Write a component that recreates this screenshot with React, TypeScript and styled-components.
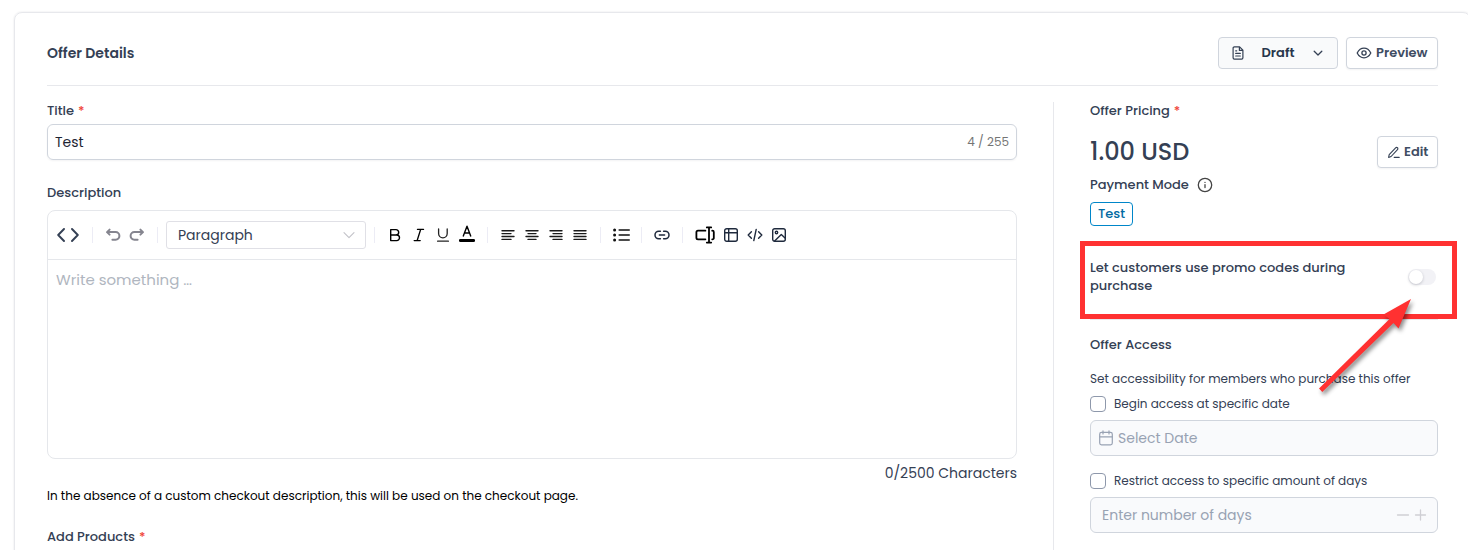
import React from "react";
import styled, { createGlobalStyle, css } from "styled-components";

const GlobalStyle = createGlobalStyle`
  *, *::before, *::after { box-sizing: border-box; }
  body {
    margin: 0;
    background: #fff;
    color: #344054;
    font-family: Poppins, Inter, sans-serif;
    overflow: hidden;
  }
  svg { display: block; flex: none; }
  button { font: inherit; }
`;

const Page = styled.div`
  position: relative;
  height: 550px;
  padding: 12px 0 0 14px;
  overflow: hidden;
`;

const Card = styled.main`
  width: 1457px;
  height: 600px;
  padding: 0 32px;
  border: 1px solid #e7e8ec;
  border-radius: 8px;
  box-shadow: 0 0 2px rgba(16, 24, 40, 0.12);
`;

const Header = styled.header`
  display: flex;
  align-items: center;
  justify-content: space-between;
  height: 73px;
  padding-top: 7px;
  border-bottom: 1px solid #e7e8ec;
`;

const Heading = styled.h1`
  margin: 0;
  font-size: 14px;
  font-weight: 600;
  line-height: 20px;
`;

const Actions = styled.div`
  display: flex;
  gap: 8px;
`;

const Button = styled.button<{ $width: number; $muted?: boolean }>`
  display: flex;
  align-items: center;
  width: ${(p) => p.$width}px;
  height: 32px;
  padding: 0 9px;
  gap: 4px;
  border: 1px solid #d0d5dd;
  border-radius: 4px;
  background: ${(p) => (p.$muted ? "#f9fafb" : "#fff")};
  box-shadow: ${(p) => (p.$muted ? "none" : "0 1px 2px rgba(16, 24, 40, 0.05)")};
  color: ${(p) => (p.$muted ? "#27364b" : "#3f4d63")};
  font-size: 13px;
  font-weight: 600;
  white-space: nowrap;
  ${(p) =>
    p.$muted &&
    css`
      justify-content: space-between;
      padding: 0 13px;
    `}
`;

const Columns = styled.div`
  display: flex;
  padding-top: 16px;
`;

const MainColumn = styled.section`
  width: 970px;
`;

const SideColumn = styled.aside`
  width: 385px;
  height: 490px;
  margin-left: 36px;
  padding-left: 36px;
  border-left: 1px solid #e7e8ec;
`;

const Label = styled.div`
  display: flex;
  align-items: center;
  height: 18px;
  font-size: 13px;
  font-weight: 500;
  line-height: 18px;
  white-space: nowrap;
`;

const Required = styled.span`
  margin-left: 4px;
  color: #f04438;
`;

const TitleField = styled.div`
  display: flex;
  align-items: center;
  justify-content: space-between;
  height: 36px;
  margin: 4px 0 24px;
  padding: 0 7px;
  border: 1px solid #d0d5dd;
  border-radius: 6px;
  box-shadow: 0 1px 2px rgba(16, 24, 40, 0.05);
  color: #1d2433;
  font-size: 14px;
`;

const Counter = styled.span`
  color: #757575;
  font-size: 12px;
`;

const Editor = styled.div`
  height: 249px;
  margin-top: 8px;
  border: 1px solid #e5e7eb;
  border-radius: 8px;
`;

const Toolbar = styled.div`
  display: flex;
  align-items: center;
  height: 49px;
  padding: 0 9px;
  border-bottom: 1px solid #e5e7eb;
`;

const ToolGroup = styled.div`
  display: flex;
  align-items: center;
  gap: 8px;
  margin-left: 12px;
`;

const Separator = styled.span<{ $left?: number }>`
  width: 1px;
  height: 16px;
  margin-left: ${(p) => p.$left ?? 12}px;
  background: #ececf5;
`;

const StyleSelect = styled.div`
  display: flex;
  align-items: center;
  justify-content: space-between;
  width: 200px;
  height: 28px;
  margin-left: 8px;
  padding: 0 10px 0 11px;
  border: 1px solid #e0e0e6;
  border-radius: 3px;
  font-size: 14px;
`;

const Placeholder = styled.div`
  padding: 10px 8px;
  color: #b0b6c0;
  font-size: 15px;
  line-height: 20px;
`;

const CharacterCount = styled.div`
  height: 20px;
  margin-top: 4px;
  font-size: 14px;
  line-height: 20px;
  text-align: right;
`;

const Note = styled.p`
  margin: 4px 0 23px;
  color: #000;
  font-size: 12px;
  line-height: 18px;
`;

const PriceRow = styled.div`
  display: flex;
  align-items: center;
  justify-content: space-between;
  height: 32px;
  margin-top: 16px;
`;

const Price = styled.div`
  font-size: 24px;
  font-weight: 500;
  line-height: 32px;
`;

const ModeRow = styled.div`
  display: flex;
  align-items: center;
  gap: 8px;
  margin-top: 8px;
`;

const Badge = styled.span`
  display: flex;
  align-items: center;
  justify-content: center;
  width: 43px;
  height: 24px;
  margin-top: 8px;
  border: 1px solid #0086c9;
  border-radius: 4px;
  color: #026aa2;
  font-size: 13px;
  font-weight: 500;
`;

const PromoRow = styled.div`
  display: flex;
  align-items: center;
  justify-content: space-between;
  height: 94px;
  padding: 8px 2px 0 0;
  border-bottom: 1px solid #e7e8ec;
`;

const PromoText = styled.div`
  width: 290px;
  font-size: 13px;
  font-weight: 500;
  line-height: 18px;
`;

const Toggle = styled.span`
  display: flex;
  align-items: center;
  width: 28px;
  height: 16px;
  border-radius: 8px;
  background: #f2f2f6;
  &::before {
    content: "";
    width: 14px;
    height: 14px;
    margin-left: 1px;
    border-radius: 50%;
    background: #fff;
    box-shadow: 0 1px 3px rgba(16, 24, 40, 0.22);
  }
`;

const AccessHeading = styled(Label)`
  margin-top: 16px;
`;

const Hint = styled.div`
  height: 18px;
  margin-top: 16px;
  font-size: 12px;
  line-height: 18px;
  white-space: nowrap;
`;

const CheckRow = styled.label<{ $top: number }>`
  display: flex;
  align-items: center;
  gap: 8px;
  height: 16px;
  margin-top: ${(p) => p.$top}px;
  font-size: 12px;
  white-space: nowrap;
`;

const Box = styled.span`
  width: 16px;
  height: 16px;
  border: 1px solid #8e98ab;
  border-radius: 4px;
  background: #fff;
`;

const DisabledField = styled.div<{ $pad: string }>`
  display: flex;
  align-items: center;
  gap: 5px;
  height: 36px;
  margin-top: 8px;
  padding: ${(p) => p.$pad};
  border: 1px solid #d0d5dd;
  border-radius: 6px;
  background: #f9fafc;
  color: #98a2b3;
  font-size: 14px;
`;

const Stepper = styled.span`
  display: flex;
  gap: 4px;
  margin-left: auto;
`;

const Highlight = styled.div`
  position: absolute;
  left: 1080px;
  top: 241px;
  width: 377px;
  height: 78px;
  border: 5px solid #ff3131;
`;

const Arrow = styled.svg`
  position: absolute;
  left: 1300px;
  top: 280px;
  filter: drop-shadow(2px 3px 2px rgba(0, 0, 0, 0.45));
`;

type IconProps = {
  w?: number;
  h?: number;
  color?: string;
  sw?: number;
  children: React.ReactNode;
};

const Icon = ({ w = 16, h = w, color = "#344054", sw = 1.3, children }: IconProps) => (
  <svg width={w} height={h} viewBox={`0 0 ${w} ${h}`} fill="none" stroke={color} strokeWidth={sw} strokeLinecap="round" strokeLinejoin="round">
    {children}
  </svg>
);

const alignLines: Record<string, [number, number][]> = {
  left: [[2, 14], [2, 11], [2, 14], [2, 11]],
  center: [[2, 14], [4, 12], [2, 14], [4, 12]],
  right: [[2, 14], [5, 14], [2, 14], [5, 14]],
  justify: [[2, 14], [2, 14], [2, 14], [2, 14]],
};

const AlignIcon = ({ kind }: { kind: string }) => (
  <Icon color="#1a1a1a" sw={1.4}>
    {alignLines[kind].map(([a, b], i) => (
      <path key={i} d={`M${a} ${3.7 + i * 2.9}H${b}`} />
    ))}
  </Icon>
);

export default function App() {
  return (
    <Page>
      <GlobalStyle />
      <Card>
        <Header>
          <Heading>Offer Details</Heading>
          <Actions>
            <Button $width={120} $muted>
              <Icon w={12} h={14} sw={1.2}>
                <path d="M7.6.9H2.4A1.3 1.3 0 0 0 1.1 2.2v9.6a1.3 1.3 0 0 0 1.3 1.3h7.2a1.3 1.3 0 0 0 1.3-1.3V4.2zM7.4 1v3.4h3.4M3.7 4.8h1M3.7 7.4h4.6M3.7 10h4.6" />
              </Icon>
              Draft
              <Icon w={12} h={12}>
                <path d="M2.2 4.2 6 8l3.8-3.8" />
              </Icon>
            </Button>
            <Button $width={92}>
              <Icon>
                <path d="M1.2 8S3.6 3.2 8 3.2 14.8 8 14.8 8 12.4 12.8 8 12.8 1.2 8 1.2 8z" />
                <circle cx="8" cy="8" r="2.1" />
              </Icon>
              Preview
            </Button>
          </Actions>
        </Header>
        <Columns>
          <MainColumn>
            <Label>
              Title<Required>*</Required>
            </Label>
            <TitleField>
              Test <Counter>4 / 255</Counter>
            </TitleField>
            <Label>Description</Label>
            <Editor>
              <Toolbar>
                <Icon w={22} h={16} sw={1.9}>
                  <path d="M7 2 1.2 8 7 14M15 2l5.8 6L15 14" />
                </Icon>
                <Separator $left={13} />
                <ToolGroup>
                  <Icon color="#85858f" sw={2}>
                    <path d="M4.6 2.6 2 5.1l2.6 2.5M2.4 5.1h8.2a3.8 3.8 0 0 1 0 7.6H7.4" />
                  </Icon>
                  <Icon color="#85858f" sw={2}>
                    <path d="M11.4 2.6 14 5.1l-2.6 2.5M13.6 5.1H5.4a3.8 3.8 0 0 0 0 7.6h3.2" />
                  </Icon>
                </ToolGroup>
                <Separator />
                <StyleSelect>
                  Paragraph
                  <Icon w={12} h={12} color="#c2c2c8" sw={1.1}>
                    <path d="M1 3.6 6 8.6l5-5" />
                  </Icon>
                </StyleSelect>
                <Separator $left={8} />
                <ToolGroup>
                  <Icon color="#000" sw={1.4}>
                    <path d="M3.7 2.6h5.3a2.7 2.7 0 0 1 0 5.4H3.7zM3.7 8h6a2.8 2.8 0 0 1 0 5.6h-6z" />
                  </Icon>
                  <Icon color="#000" sw={1.4}>
                    <path d="M6.5 2.4h6M3.2 13.6h6M9.6 2.6 6.2 13.4" />
                  </Icon>
                  <Icon color="#222" sw={1.3}>
                    <path d="M3.6 2v4.6a4.3 4.3 0 0 0 8.6 0V2M2.6 14.2h10.8" />
                  </Icon>
                  <Icon h={20} color="#000" sw={1.4}>
                    <path d="M4.3 11 8 1.2l3.7 9.8M5.6 8h4.8" />
                    <path d="M1.4 15.5h13.2" strokeWidth="3" />
                  </Icon>
                </ToolGroup>
                <Separator />
                <ToolGroup>
                  <AlignIcon kind="left" />
                  <AlignIcon kind="center" />
                  <AlignIcon kind="right" />
                  <AlignIcon kind="justify" />
                </ToolGroup>
                <Separator />
                <ToolGroup>
                  <Icon w={18} h={16} color="#111" sw={1.6}>
                    <path d="M6.2 3h10M6.2 8h10M6.2 13h10" />
                    <path d="M1.6 3h.01M1.6 8h.01M1.6 13h.01" strokeWidth="3" />
                  </Icon>
                </ToolGroup>
                <Separator $left={10} />
                <ToolGroup>
                  <Icon color="#1f2a3d" sw={1.5}>
                    <path d="M6.4 4.3H4.7a3.7 3.7 0 0 0 0 7.4h1.7M9.6 4.3h1.7a3.7 3.7 0 0 1 0 7.4H9.6M5.4 8h5.2" />
                  </Icon>
                </ToolGroup>
                <Separator />
                <ToolGroup>
                  <Icon w={20} h={18} color="#000" sw={1.8}>
                    <path d="M10.4 4.7H3A1.6 1.6 0 0 0 1.4 6.3v5.4A1.6 1.6 0 0 0 3 13.3h7.4M17.2 4.7h.2a1.4 1.4 0 0 1 1.4 1.4v5.8a1.4 1.4 0 0 1-1.4 1.4h-.2M14 1.6v14.8M11.8 1.4h4.4M11.8 16.6h4.4" />
                  </Icon>
                  <Icon color="#1f2a3d" sw={1.4}>
                    <rect x="1.7" y="1.7" width="12.6" height="12.6" rx="2" />
                    <path d="M1.7 5.7h12.6M5.7 1.7v12.6" />
                  </Icon>
                  <Icon color="#1f2a3d" sw={1.4}>
                    <path d="M4.4 4.7 1.2 8l3.2 3.3M11.6 4.7 14.8 8l-3.2 3.3M9.2 2.4 6.8 13.6" />
                  </Icon>
                  <Icon color="#1f2a3d" sw={1.4}>
                    <rect x="1.7" y="1.7" width="12.6" height="12.6" rx="2" />
                    <circle cx="5.5" cy="5.5" r="1.2" />
                    <path d="M3.6 14 10.3 7.5l4 3.8" />
                  </Icon>
                </ToolGroup>
              </Toolbar>
              <Placeholder>Write something …</Placeholder>
            </Editor>
            <CharacterCount>0/2500 Characters</CharacterCount>
            <Note>In the absence of a custom checkout description, this will be used on the checkout page.</Note>
            <Label>
              Add Products<Required>*</Required>
            </Label>
          </MainColumn>
          <SideColumn>
            <Label>
              Offer Pricing<Required>*</Required>
            </Label>
            <PriceRow>
              <Price>1.00 USD</Price>
              <Button $width={61}>
                <Icon w={13} h={14} sw={1.1}>
                  <path d="M1.6 12.4l.6-2.8 6.4-6.8a1.3 1.3 0 0 1 1.9 1.8l-6.4 6.9zM7.2 12.4h5" />
                </Icon>
                Edit
              </Button>
            </PriceRow>
            <ModeRow>
              <Label>Payment Mode</Label>
              <Icon color="#444">
                <circle cx="8" cy="8" r="6.7" />
                <path d="M8 7.6v3M8 5.3v.1" />
              </Icon>
            </ModeRow>
            <Badge>Test</Badge>
            <PromoRow>
              <PromoText>Let customers use promo codes during purchase</PromoText>
              <Toggle />
            </PromoRow>
            <AccessHeading>Offer Access</AccessHeading>
            <Hint>Set accessibility for members who purchase this offer</Hint>
            <CheckRow $top={8}>
              <Box />
              Begin access at specific date
            </CheckRow>
            <DisabledField $pad="0 8px">
              <Icon w={14} h={16} color="#98a2b3" sw={1.2}>
                <rect x=".7" y="2.4" width="12.6" height="12.4" rx="1.8" />
                <path d="M.7 6.8h12.6M4 .9v3M10 .9v3" />
              </Icon>
              Select Date
            </DisabledField>
            <CheckRow $top={17}>
              <Box />
              Restrict access to specific amount of days
            </CheckRow>
            <DisabledField $pad="0 10px 0 11px">
              Enter number of days
              <Stepper>
                <Icon w={14} h={16} color="#cfcfd4" sw={1.3}>
                  <path d="M1.5 8h11" />
                </Icon>
                <Icon w={13} h={16} color="#cfcfd4" sw={1.3}>
                  <path d="M1.5 8h10M6.5 3v10" />
                </Icon>
              </Stepper>
            </DisabledField>
          </SideColumn>
        </Columns>
      </Card>
      <Highlight />
      <Arrow width="140" height="130" viewBox="0 0 140 130">
        <path d="M19 108.5 89.5 39 83.5 34.5 111 19 98.5 48.5 93.5 43 22.3 112z" fill="#ff3131" />
      </Arrow>
    </Page>
  );
}
